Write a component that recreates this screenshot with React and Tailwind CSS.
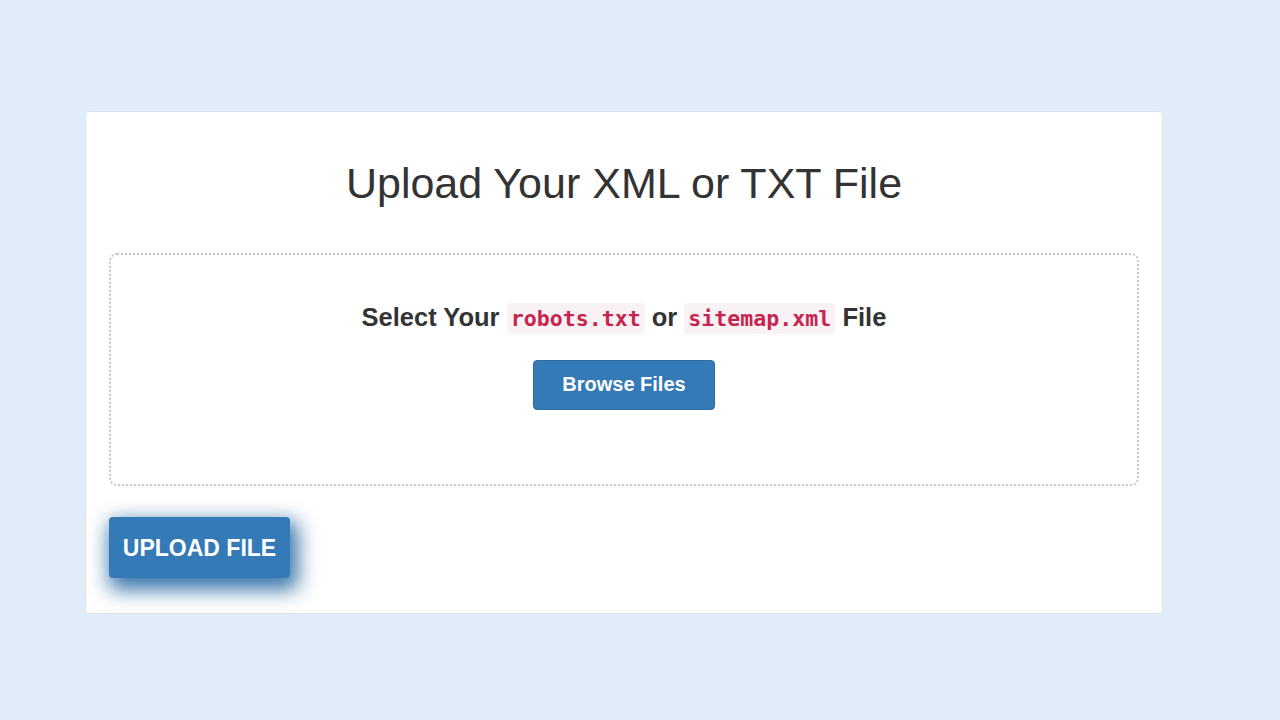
// App.jsx
function App() {
  return (
    <div className="min-h-screen w-full bg-[#e0ecf8] pt-[111px] pl-[85px] font-['Liberation_Sans',Arial,sans-serif] text-[#333]">
      <div className="w-[1078px] rounded-[4px] border border-[#dde3ea] bg-white px-[23px] pt-[48px] pb-[35px]">
        <h1 className="text-center text-[43px] font-normal leading-[1.1]">
          Upload Your XML or TXT File
        </h1>

        <div className="mt-[46px] flex h-[233px] flex-col items-center rounded-[8px] border-2 border-dotted border-[#c8c8c8] pt-[48px]">
          <h3 className="text-[25.5px] font-bold leading-[1.1]">
            Select Your{' '}
            <code className="rounded-[4px] bg-[#f9f2f4] px-[4px] py-[3px] font-['DejaVu_Sans_Mono',monospace] text-[21.6px] text-[#c7254e]">
              robots.txt
            </code>{' '}
            or{' '}
            <code className="rounded-[4px] bg-[#f9f2f4] px-[4px] py-[3px] font-['DejaVu_Sans_Mono',monospace] text-[21.6px] text-[#c7254e]">
              sitemap.xml
            </code>{' '}
            File
          </h3>
          <button className="mt-[29px] flex h-[50px] w-[182px] items-center justify-center rounded-[4px] border border-[#2e6da4] bg-[#337ab7] pb-[3px] text-[20px] font-bold text-white">
            Browse Files
          </button>
        </div>

        <button className="mt-[31px] flex h-[61px] w-[181px] items-center justify-center rounded-[4px] bg-[#337ab7] text-[23px] font-bold text-white shadow-[4px_8px_20px_4px_rgba(25,95,155,0.85)]">
          UPLOAD FILE
        </button>
      </div>
    </div>
  );
}

export default App;
